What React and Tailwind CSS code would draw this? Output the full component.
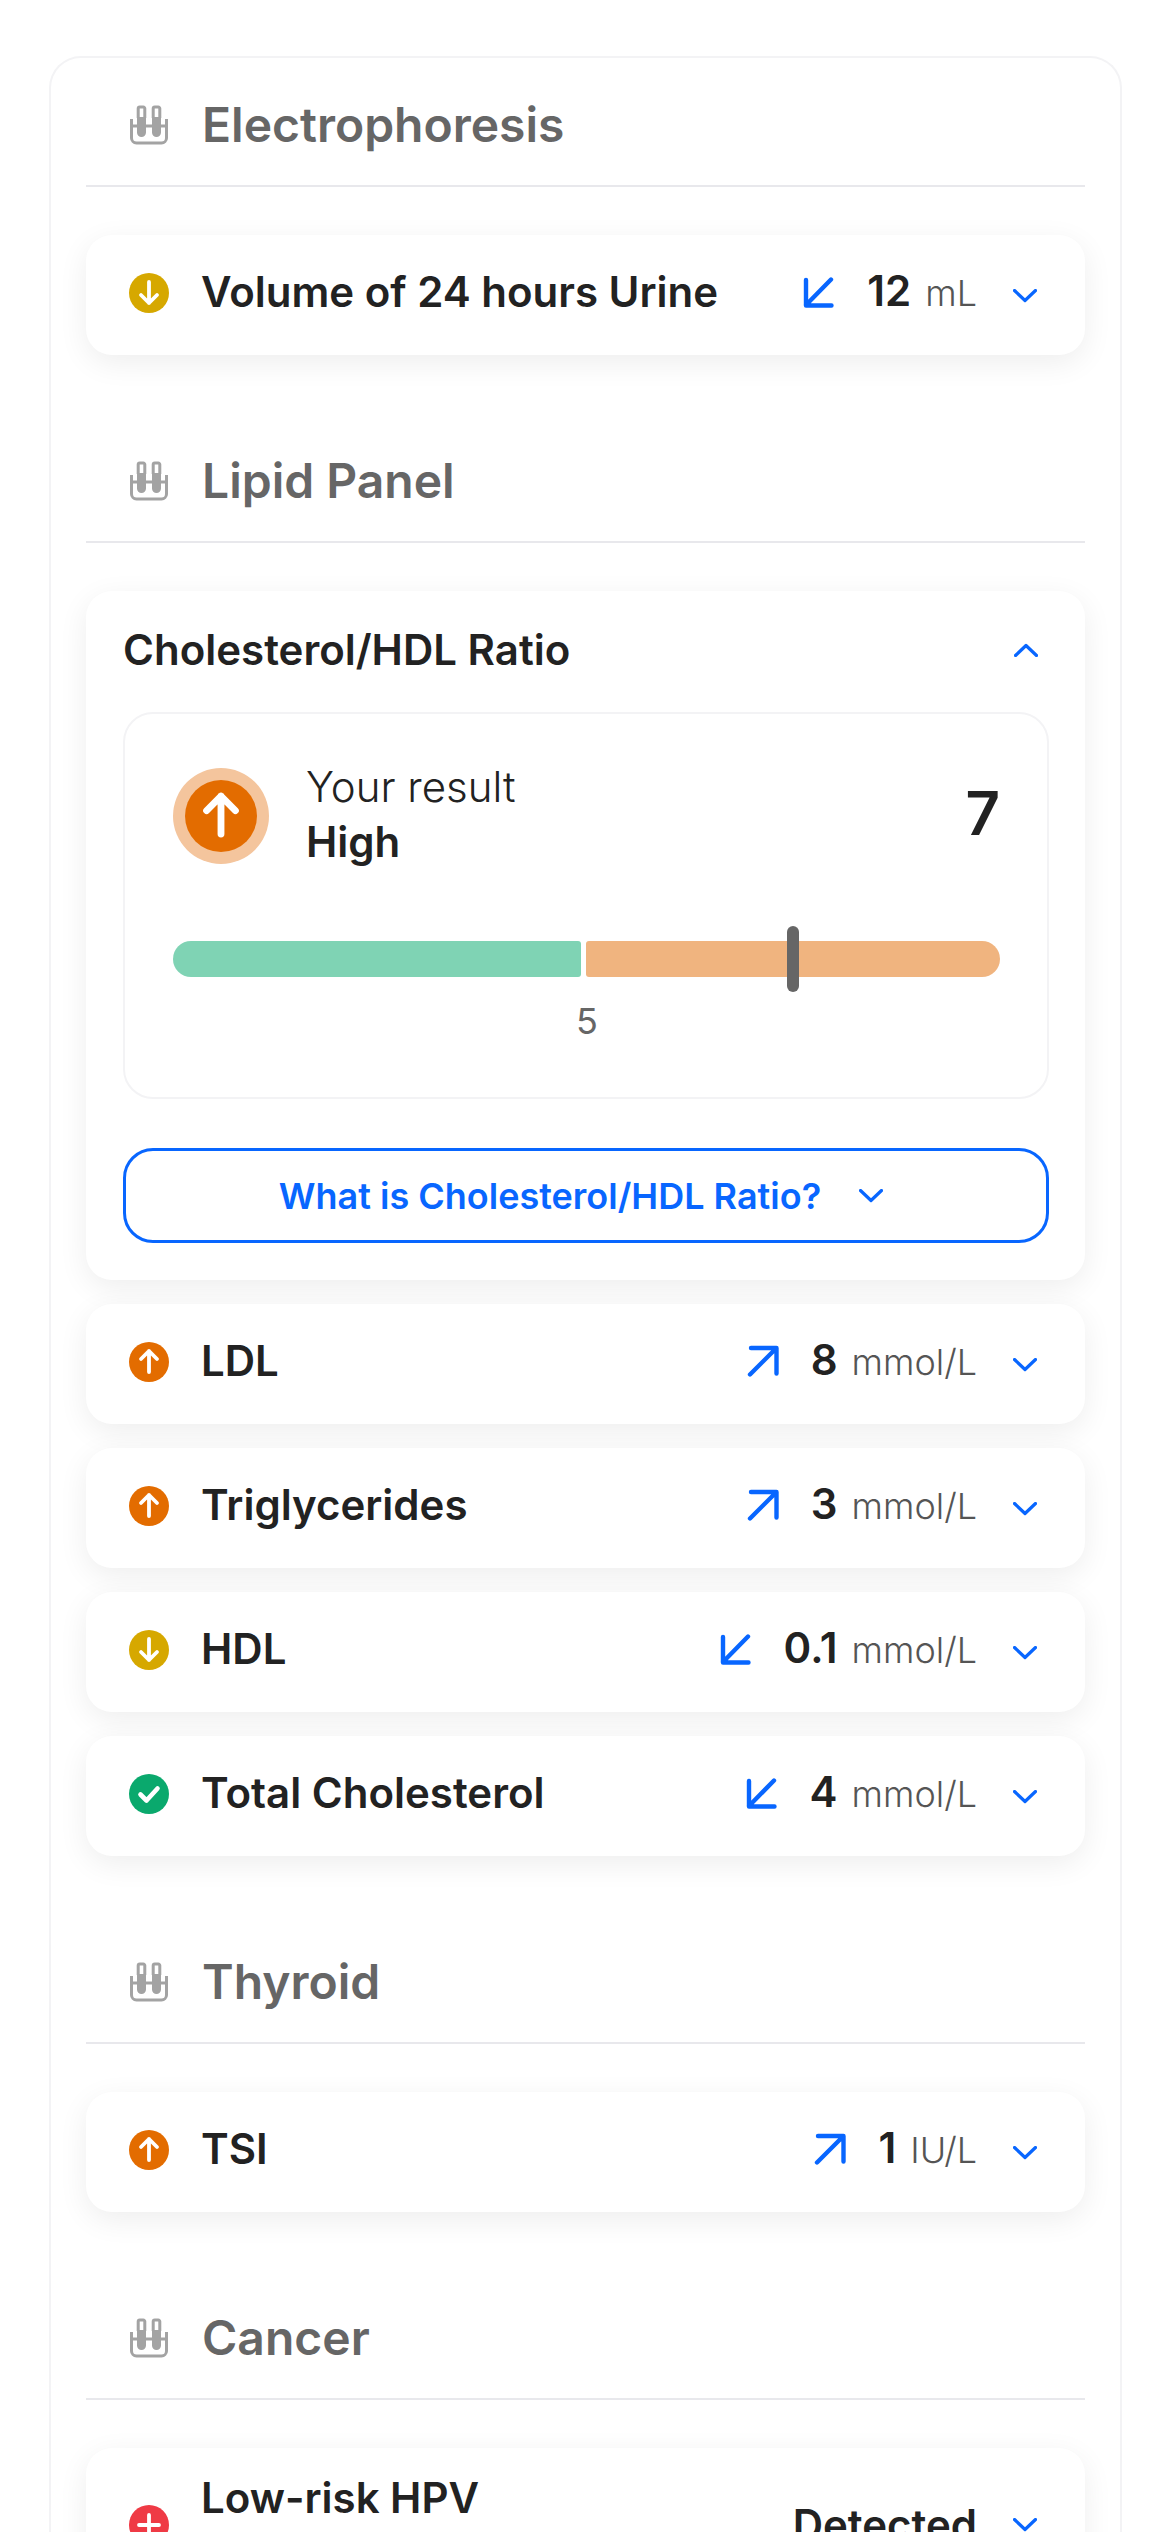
import React from 'react';

const INTER = "font-['Inter',sans-serif]";

function TubesIcon() {
  return (
    <svg width="38" height="40" viewBox="0 0 38 40" fill="none" className="shrink-0">
      <path d="M7 12h9v15.5a4.5 4.5 0 0 1-9 0zM22 12h9v15.5a4.5 4.5 0 0 1-9 0z" fill="#a3a3a3" />
      <path d="M8.2 13V3.5A1.5 1.5 0 0 1 9.7 2h3.6a1.5 1.5 0 0 1 1.5 1.5V13M23.2 13V3.5A1.5 1.5 0 0 1 24.7 2h3.6a1.5 1.5 0 0 1 1.5 1.5V13" stroke="#a3a3a3" strokeWidth="3" />
      <path d="M1.5 14v19a5 5 0 0 0 5 5h25a5 5 0 0 0 5-5V14" stroke="#a3a3a3" strokeWidth="3" />
      <path d="M1 21h36" stroke="#a3a3a3" strokeWidth="3" />
    </svg>
  );
}

function StatusGlyph({ kind, size = 40 }) {
  const glyphs = {
    up: 'M20 30V9M12 17l8-8 8 8',
    down: 'M20 9v21M12 22l8 8 8-8',
    ok: 'M11.5 20.5l6 6 11-12',
    plus: 'M20 10v20M10 20h20',
  };
  return (
    <svg width={size} height={size} viewBox="0 0 40 40" fill="none">
      <path d={glyphs[kind]} stroke="#fff" strokeWidth={kind === 'ok' ? 4.6 : 3.8} strokeLinecap="round" strokeLinejoin="round" />
    </svg>
  );
}

const statusColors = {
  up: 'bg-[#e36c00]',
  down: 'bg-[#d6a800]',
  ok: 'bg-[#0aa96d]',
  plus: 'bg-[#ef3a45]',
};

function Trend({ dir }) {
  const d = dir === 'up' ? 'M4 3h25.5v25.5M29 3.5L3 29.5' : 'M28 3.5L3 29M3 4v25.5h25.5';
  return (
    <svg width="32" height="32" viewBox="0 0 32 32" fill="none" className="shrink-0">
      <path d={d} stroke="#0866ff" strokeWidth="4.4" strokeLinecap="round" strokeLinejoin="round" />
    </svg>
  );
}

function Chevron({ up }) {
  return (
    <svg width="24" height="14" viewBox="0 0 24 14" fill="none" className="shrink-0">
      <path d={up ? 'M1.5 12.5L12 2.5l10.5 10' : 'M1.5 1.5L12 11.5l10.5-10'} stroke="#0866ff" strokeWidth="3.2" strokeLinecap="round" strokeLinejoin="round" />
    </svg>
  );
}

function SectionTitle({ title, first }) {
  return (
    <div className={`${first ? 'mt-0' : 'mt-[90px]'} mb-[48px] flex h-[98px] items-start gap-[34px] border-b-2 border-[#e8e8ec] pl-[44px]`}>
      <div className="flex h-[72px] items-center">
        <TubesIcon />
      </div>
      <h2 className="text-[48px] leading-[72px] font-semibold text-[#666666]">{title}</h2>
    </div>
  );
}

function ResultRow({ status, name, trend, value, unit }) {
  return (
    <div className="flex h-[120px] items-center rounded-[26px] bg-white pr-[48px] pl-[43px] shadow-[0_8px_30px_rgba(0,0,0,0.07)]">
      <div className={`mb-[4px] flex h-[40px] w-[40px] shrink-0 items-center justify-center rounded-full ${statusColors[status]}`}>
        <StatusGlyph kind={status} />
      </div>
      <span className="mb-[6px] ml-[32px] text-[42px] leading-[54px] font-semibold text-[#222222]">{name}</span>
      <div className="mb-[6px] ml-auto flex items-baseline">
        <span className="mr-[32px] self-center">
          <Trend dir={trend} />
        </span>
        <span className="text-[42px] leading-[54px] font-semibold text-[#222222]">{value}</span>
        <span className="ml-[14px] text-[36px] leading-[54px] font-light text-[#555555]">{unit}</span>
      </div>
      <div className="mt-[2px] ml-[36px]">
        <Chevron />
      </div>
    </div>
  );
}

function ExpandedCard() {
  return (
    <div className="rounded-[26px] bg-white pr-[36px] pb-[37px] pl-[37px] shadow-[0_8px_30px_rgba(0,0,0,0.07)]">
      <div className="flex h-[121px] items-center justify-between pr-[11px] pb-[4px]">
        <span className="text-[42px] leading-[54px] font-semibold text-[#222222]">Cholesterol/HDL Ratio</span>
        <Chevron up />
      </div>

      <div className="h-[387px] rounded-[30px] border-2 border-[#f3f3f5] pt-[54px] pr-[47px] pl-[48px]">
        <div className="flex h-[96px] items-center">
          <div className="flex h-[96px] w-[96px] items-center justify-center rounded-full bg-[#f4c59d]">
            <div className="flex h-[72px] w-[72px] items-center justify-center rounded-full bg-[#e36c00]">
              <StatusGlyph kind="up" size={72} />
            </div>
          </div>
          <div className="mb-[4px] ml-[37px]">
            <div className="text-[42px] leading-[55px] font-light text-[#222222]">Your result</div>
            <div className="text-[42px] leading-[55px] font-semibold text-[#222222]">High</div>
          </div>
          <div className="mb-[6px] ml-auto text-[60px] leading-[72px] font-semibold text-[#222222]">7</div>
        </div>

        <div className="relative mt-[77px] flex h-[36px] gap-[5px]">
          <div className="w-[408px] rounded-l-[18px] rounded-r-[3px] bg-[#7fd3b4]" />
          <div className="flex-1 rounded-l-[3px] rounded-r-[18px] bg-[#f0b47f]" />
          <div className="absolute top-[-15px] left-[614px] h-[66px] w-[12px] rounded-full bg-[#666666]" />
        </div>
        <div className="mt-[22px] pl-[403px] text-[36px] leading-[44px] font-normal text-[#666666]">5</div>
      </div>

      <div className="mt-[49px] flex h-[95px] items-center justify-center gap-[38px] rounded-[30px] border-[3px] border-[#0866ff] pr-[10px]">
        <span className="text-[36px] leading-[44px] font-semibold text-[#0866ff]">What is Cholesterol/HDL Ratio?</span>
        <Chevron />
      </div>
    </div>
  );
}

export default function App() {
  return (
    <div className={`h-[2532px] overflow-hidden bg-white ${INTER}`}>
      <div className="mt-[56px] mr-[48px] ml-[49px] rounded-t-[32px] border-2 border-b-0 border-[#f3f3f5] px-[35px] pt-[31px]">
        <SectionTitle title="Electrophoresis" first />
        <ResultRow status="down" name="Volume of 24 hours Urine" trend="down" value="12" unit="mL" />

        <SectionTitle title="Lipid Panel" />
        <div className="flex flex-col gap-[24px]">
          <ExpandedCard />
          <ResultRow status="up" name="LDL" trend="up" value="8" unit="mmol/L" />
          <ResultRow status="up" name="Triglycerides" trend="up" value="3" unit="mmol/L" />
          <ResultRow status="down" name="HDL" trend="down" value="0.1" unit="mmol/L" />
          <ResultRow status="ok" name="Total Cholesterol" trend="down" value="4" unit="mmol/L" />
        </div>

        <SectionTitle title="Thyroid" />
        <ResultRow status="up" name="TSI" trend="up" value="1" unit="IU/L" />

        <SectionTitle title="Cancer" />
        <div className="flex h-[154px] items-center rounded-[26px] bg-white pr-[48px] pl-[43px] shadow-[0_8px_30px_rgba(0,0,0,0.07)]">
          <div className={`flex h-[40px] w-[40px] shrink-0 items-center justify-center rounded-full ${statusColors.plus}`}>
            <StatusGlyph kind="plus" />
          </div>
          <div className="ml-[32px] h-[108px] text-[42px] leading-[54px] font-semibold text-[#222222]">Low-risk HPV</div>
          <span className="ml-auto text-[42px] leading-[54px] font-semibold text-[#222222]">Detected</span>
          <div className="ml-[36px]">
            <Chevron />
          </div>
        </div>
      </div>
    </div>
  );
}
